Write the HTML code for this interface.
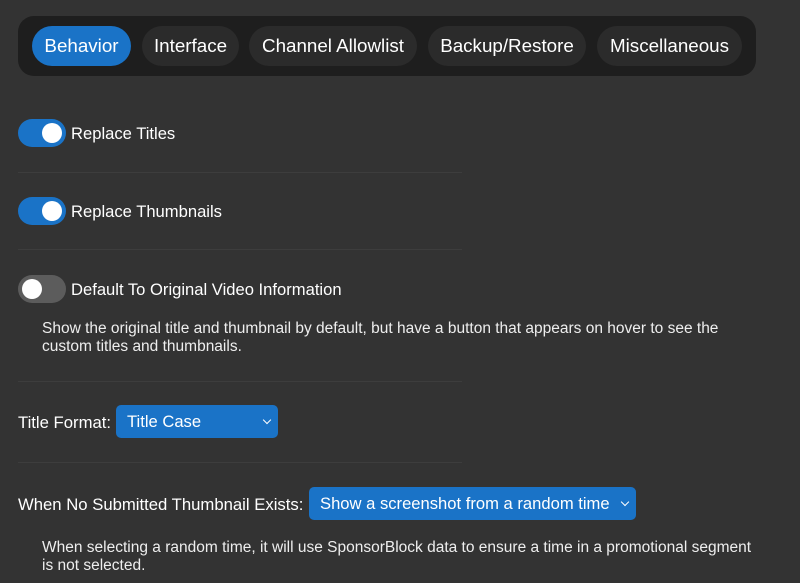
<!DOCTYPE html><html><head><style>
body{margin:0;width:800px;height:583px;background:#333;font-family:"Liberation Sans",sans-serif;color:#fff;position:relative;overflow:hidden}
.bar{position:absolute;left:18px;top:16px;width:738px;height:60px;background:#1e1e1e;border-radius:16px}
.tab{position:absolute;top:26px;height:40px;line-height:40px;border-radius:20px;background:#2b2b2b;font-size:18.8px;text-align:center}
.tog{position:absolute;left:18px;width:48px;height:28px;border-radius:14px;background:#1a73c7}
.tog::after{content:"";position:absolute;top:4px;left:24px;width:20px;height:20px;border-radius:50%;background:#fff}
.tog.off{background:#5c5c5c}.tog.off::after{left:4px}
.lbl{position:absolute;left:71px;font-size:16.6px}
.sep{position:absolute;left:18px;width:444px;height:1px;background:#3d3d3d}
.desc{position:absolute;left:42px;font-size:15.5px;line-height:18px;color:#eee}
.sel{position:absolute;height:33px;line-height:33px;background:#1a73c7;border-radius:5px;font-size:16.6px;padding-left:11px;box-sizing:border-box}
.sel::after{content:"";position:absolute;right:8px;top:12px;width:5px;height:5px;border-right:1.5px solid #fff;border-bottom:1.5px solid #fff;transform:rotate(45deg)}
.t{position:absolute;font-size:16.7px}
</style></head><body>
<div class="bar"></div>
<div class="tab" style="left:32px;width:99px;background:#1a73c7">Behavior</div>
<div class="tab" style="left:142px;width:97px">Interface</div>
<div class="tab" style="left:249px;width:168px">Channel Allowlist</div>
<div class="tab" style="left:428px;width:158px">Backup/Restore</div>
<div class="tab" style="left:597px;width:145px">Miscellaneous</div>
<div class="tog" style="top:119px"></div><div class="lbl" style="top:124px">Replace Titles</div>
<div class="sep" style="top:172px"></div>
<div class="tog" style="top:197px"></div><div class="lbl" style="top:202px">Replace Thumbnails</div>
<div class="sep" style="top:249px"></div>
<div class="tog off" style="top:275px"></div><div class="lbl" style="top:280px">Default To Original Video Information</div>
<div class="desc" style="top:320px">Show the original title and thumbnail by default, but have a button that appears on hover to see the<br>custom titles and thumbnails.</div>
<div class="sep" style="top:381px"></div>
<div class="t" style="left:18px;top:413px">Title Format:</div>
<div class="sel" style="left:116px;top:405px;width:162px">Title Case</div>
<div class="sep" style="top:462px"></div>
<div class="t" style="left:18px;top:495px">When No Submitted Thumbnail Exists:</div>
<div class="sel" style="left:309px;top:487px;width:327px">Show a screenshot from a random time</div>
<div class="desc" style="top:539px">When selecting a random time, it will use SponsorBlock data to ensure a time in a promotional segment<br>is not selected.</div>
</body></html>
